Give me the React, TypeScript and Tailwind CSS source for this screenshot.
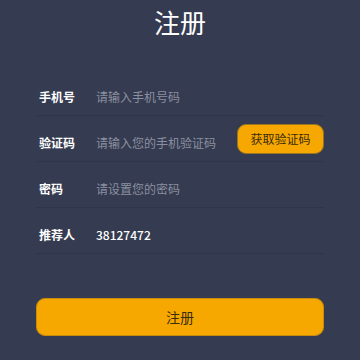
import React, { useState } from "react";

const font = { fontFamily: '"Noto Sans CJK SC", "Noto Sans", sans-serif' };

type RowProps = {
  label: string;
  placeholder?: string;
  value?: string;
  children?: React.ReactNode;
};

function Row({ label, placeholder, value, children }: RowProps) {
  const [val, setVal] = useState(value ?? "");
  return (
    <div className="flex h-[46px] items-center border-b border-[#30364a] pl-[3px]">
      <label className="mt-2 w-[57px] shrink-0 text-[12px] font-bold text-white">
        {label}
      </label>
      <input
        className="mt-2 min-w-0 flex-1 bg-transparent text-[12px] font-medium text-white outline-none placeholder:font-normal placeholder:text-[#8b90a0]"
        placeholder={placeholder}
        value={val}
        onChange={(e) => setVal(e.target.value)}
        style={font}
      />
      {children}
    </div>
  );
}

export default function App() {
  return (
    <div className="min-h-[360px] w-full bg-[#353b50] pt-[5px]" style={font}>
      <h1 className="text-center text-[26px] leading-[34px] text-white">注册</h1>
      <div className="mx-[36px] mt-[31px]">
        <Row label="手机号" placeholder="请输入手机号码" />
        <Row label="验证码" placeholder="请输入您的手机验证码">
          <button className="h-[30px] w-[87px] shrink-0 rounded-[9px] border border-[#9a7420] bg-[#f6a800] text-[12px] text-[#3a2c0c]">
            获取验证码
          </button>
        </Row>
        <Row label="密码" placeholder="请设置您的密码" />
        <Row label="推荐人" value="38127472" />
        <button className="mt-[44px] h-[38px] w-full rounded-[9px] border border-[#c98c0a] bg-[#f6a800] text-[14px] text-[#3a2c0c]">
          注册
        </button>
      </div>
    </div>
  );
}
